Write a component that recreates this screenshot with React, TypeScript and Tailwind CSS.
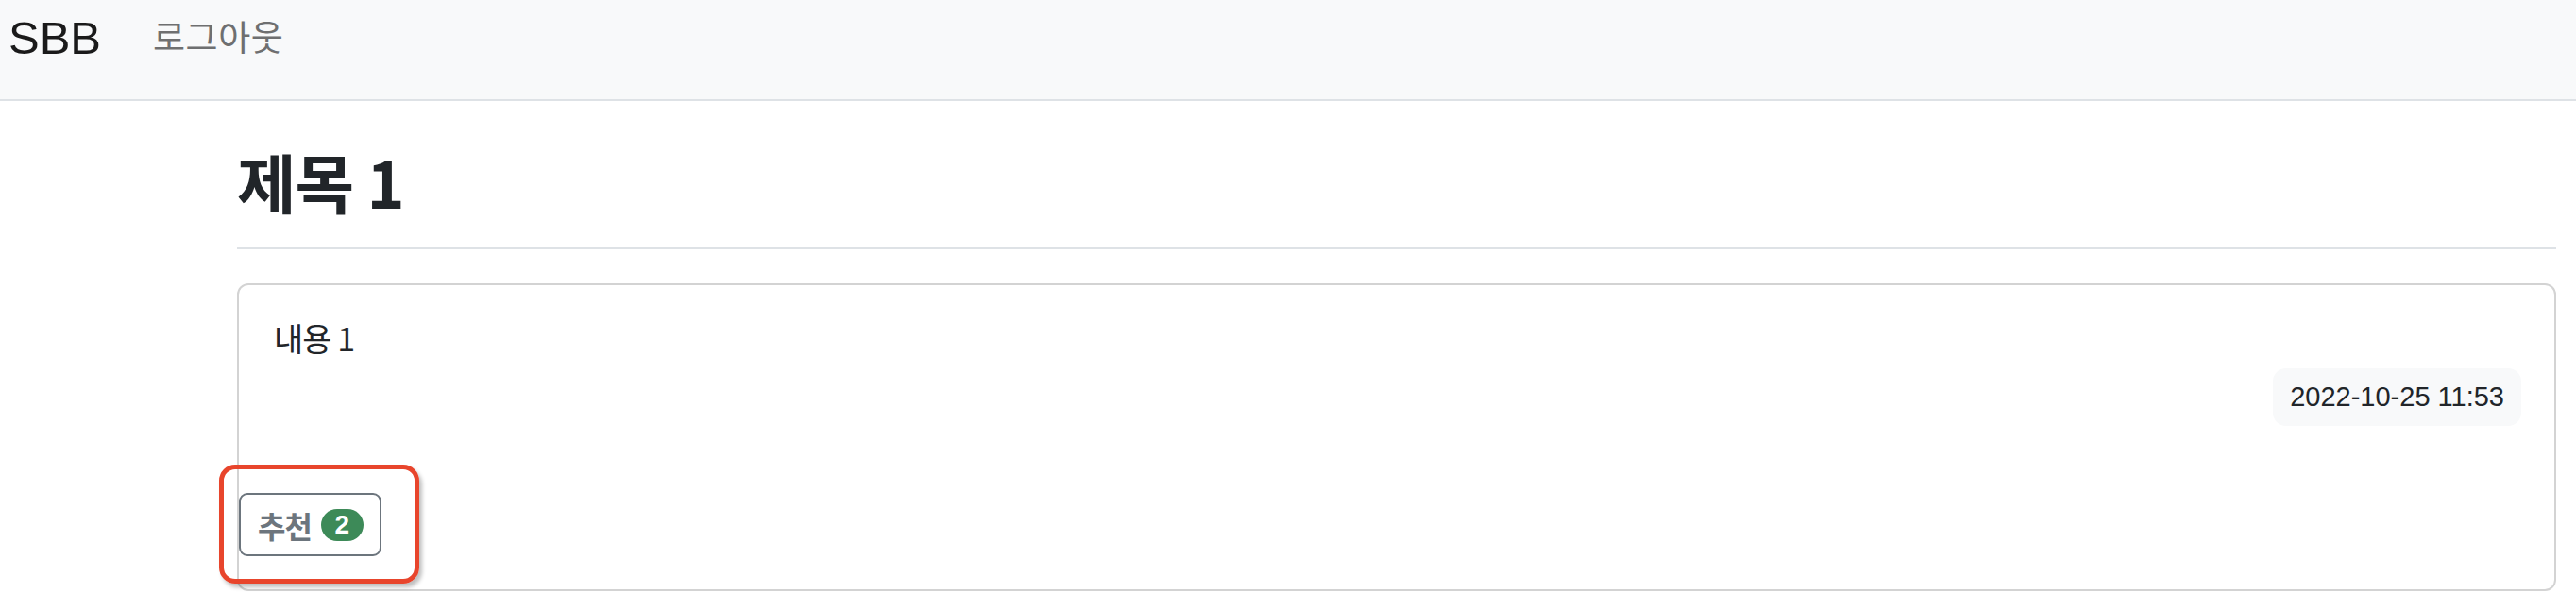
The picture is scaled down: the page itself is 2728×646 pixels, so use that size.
import React from "react";

const kr = { fontFamily: '"Noto Sans CJK KR", "Noto Sans", sans-serif' };
const lat = { fontFamily: '"Liberation Sans", Arial, sans-serif' };

export default function App() {
  return (
    <div className="relative w-[2728px] h-[646px] bg-white overflow-hidden text-[#212529]">
      <nav className="h-[107px] bg-[#f8f9fa] border-b-2 border-[#dee2e6] flex items-start">
        <div style={lat} className="ml-[9px] mt-[16px] text-[49px] leading-[49px] text-[#1a1a1a]">
          SBB
        </div>
        <div style={kr} className="ml-[55px] mt-[20px] text-[37px] leading-none tracking-[0.5px] text-[#6e6f70]">
          로그아웃
        </div>
      </nav>

      <div className="pl-[251px] pr-[21px]">
        <div
          style={kr}
          className="mt-[51px] text-[68px] leading-none font-bold tracking-[-1px] pb-[36px] border-b-2 border-[#dee2e6]"
        >
          제목 1
        </div>

        <div className="mt-[36px] h-[326px] border-2 border-[#d3d3d3] rounded-[12px] flex flex-col">
          <div style={kr} className="mt-[39px] pl-[37px] text-[34px] leading-none tracking-[-1px]">
            내용 1
          </div>
          <div className="mt-[15px] pr-[35px] flex justify-end">
            <div
              style={lat}
              className="h-[61px] px-[18px] flex items-center bg-[#f8f9fa] rounded-[14px] text-[29px] text-[#212529]"
            >
              2022-10-25 11:53
            </div>
          </div>
          <div className="mt-[71px] flex">
            <div className="w-[151px] h-[67px] border-2 border-[#6c757d] rounded-[9px] flex items-center pl-[18px] gap-[10px]">
              <span style={kr} className="text-[32px] leading-none font-bold text-[#6c757d] tracking-[-1px]">
                추천
              </span>
              <span
                style={lat}
                className="w-[45px] h-[34px] rounded-full bg-[#3d8a58] text-white flex items-center justify-center text-[28px] font-bold leading-none"
              >
                2
              </span>
            </div>
          </div>
        </div>
      </div>

      <div className="absolute left-[232px] top-[492px] w-[212px] h-[126px] border-[5px] border-[#e8452c] rounded-[17px] shadow-[3px_4px_4px_rgba(0,0,0,0.25)]" />
    </div>
  );
}
